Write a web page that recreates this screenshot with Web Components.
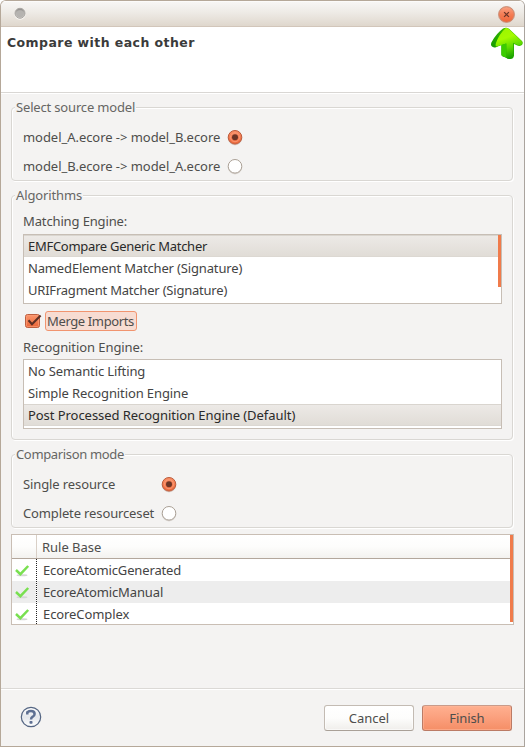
<!DOCTYPE html>
<html lang="en"><head><meta charset="utf-8"><title>Compare with each other</title>
<style>
html,body{margin:0;padding:0;background:#fff}
body{font:13px/18px "Noto Sans","Open Sans",sans-serif;color:#444;width:525px;height:747px;overflow:hidden}
</style></head><body>
<wizard-window>
  <title-bar slot="title"></title-bar>
  <wizard-header slot="header"><fit-text w="187" slot="heading">Compare with each other</fit-text></wizard-header>
  <group-box style="height:74px"><fit-text slot="legend" w="119">Select source model</fit-text>
    <div style="height:7px"></div>
    <radio-row lw="198" checked><fit-text w="197">model_A.ecore -&gt; model_B.ecore</fit-text></radio-row>
    <radio-row lw="198"><fit-text w="197">model_B.ecore -&gt; model_A.ecore</fit-text></radio-row>
  </group-box>
  <group-box style="height:245px;margin-top:14px"><fit-text slot="legend" w="66">Algorithms</fit-text>
    <field-label style="margin-top:8px;margin-bottom:4px"><fit-text w="104">Matching Engine:</fit-text></field-label>
    <list-box scroll="52">
      <list-item selected><fit-text w="179">EMFCompare Generic Matcher</fit-text></list-item>
      <list-item><fit-text w="214">NamedElement Matcher (Signature)</fit-text></list-item>
      <list-item><fit-text w="199">URIFragment Matcher (Signature)</fit-text></list-item>
    </list-box>
    <check-option><fit-text w="87">Merge Imports</fit-text></check-option>
    <field-label style="margin-top:7px;margin-bottom:3px"><fit-text w="120">Recognition Engine:</fit-text></field-label>
    <list-box>
      <list-item><fit-text w="117">No Semantic Lifting</fit-text></list-item>
      <list-item><fit-text w="160">Simple Recognition Engine</fit-text></list-item>
      <list-item selected><fit-text w="267">Post Processed Recognition Engine (Default)</fit-text></list-item>
    </list-box>
  </group-box>
  <group-box style="height:74px;margin-top:14px"><fit-text slot="legend" w="108">Comparison mode</fit-text>
    <div style="height:7px"></div>
    <radio-row lw="132" checked><fit-text w="92">Single resource</fit-text></radio-row>
    <radio-row lw="132"><fit-text w="131">Complete resourceset</fit-text></radio-row>
  </group-box>
  <rule-table><fit-text slot="head" w="59">Rule Base</fit-text>
    <rule-row><fit-text w="138">EcoreAtomicGenerated</fit-text></rule-row>
    <rule-row class="alt"><fit-text w="120">EcoreAtomicManual</fit-text></rule-row>
    <rule-row><fit-text w="86">EcoreComplex</fit-text></rule-row>
  </rule-table>
  <help-icon slot="footer"></help-icon>
  <push-button slot="footer" style="margin-left:auto"><fit-text w="40">Cancel</fit-text></push-button>
  <push-button slot="footer" primary><fit-text w="35">Finish</fit-text></push-button>
</wizard-window>
<script>
const define = (name, html, ready) => {
  const t = document.createElement('template');
  t.innerHTML = html;
  customElements.define(name, class extends HTMLElement {
    constructor() { super(); this.attachShadow({mode:'open'}).append(t.content.cloneNode(true)); }
    connectedCallback() { if (ready) ready(this, this.shadowRoot); }
  });
};

define('wizard-window', `<style>
:host{display:flex;flex-direction:column;box-sizing:border-box;width:525px;height:747px;border:1px solid #b5a899;border-right-color:#aaa49e;border-radius:6px 6px 0 0;background:#f4f3f2;overflow:hidden}
main{flex:1;padding:14px 11px 0 10px}
footer{display:flex;height:58px;box-sizing:border-box;border-top:1px solid #dbd9d6;box-shadow:inset 0 1px #fff;padding:16px 12px 0 19px;gap:8px;align-items:flex-start}
</style><slot name="title"></slot><slot name="header"></slot><main><slot></slot></main><footer><slot name="footer"></slot></footer>`);

define('title-bar', `<style>
:host{display:flex;justify-content:space-between;height:26px;box-sizing:border-box;border-bottom:1px solid #d2c6ba;background:linear-gradient(#f8f7f6,#eeebe6 45%,#dfd7cd);box-shadow:inset 0 1px #fcfbfa}
svg{display:block}
</style>
<svg width="40" height="25"><defs><linearGradient id="m" x2="0" y2="1"><stop stop-color="#898785"/><stop offset=".4" stop-color="#b2b0ad"/><stop offset="1" stop-color="#cbc8c4"/></linearGradient></defs>
<circle cx="19" cy="13" r="5.7" fill="#faf8f5"/><circle cx="19" cy="12.3" r="5" fill="url(#m)" stroke="#aaa7a3"/><circle cx="19" cy="12.8" r="3.5" fill="#b5b3b0"/></svg>
<svg width="36" height="25"><defs><linearGradient id="c" x2="0" y2="1"><stop stop-color="#faa384"/><stop offset=".5" stop-color="#f47d55"/><stop offset="1" stop-color="#ee6538"/></linearGradient></defs>
<circle cx="18.5" cy="13.7" r="8.6" fill="#e0d0c5"/><circle cx="18.5" cy="13.5" r="7.8" fill="url(#c)" stroke="#c98870"/><path d="M16.1 11.1l4.8 4.8m0-4.8l-4.8 4.8" stroke="#6b3528" stroke-width="1.3"/></svg>`);

define('wizard-header', `<style>
:host{display:flex;position:relative;height:66px;box-sizing:border-box;border-bottom:1px solid #d9d7d4;box-shadow:0 1px #fff;background:#fff;font:bold 12.5px/18px "DejaVu Sans",sans-serif;color:#3b3b3b;padding:7px 0 0 6px}
svg{position:absolute;right:0;top:-1px}
</style><slot name="heading"></slot>
<svg width="34" height="36" viewBox="0 0 34 36"><defs><linearGradient id="b" x1=".2" x2=".5" y2="1"><stop stop-color="#9bf500"/><stop offset=".35" stop-color="#a4fa00"/><stop offset=".65" stop-color="#62dd00"/><stop offset="1" stop-color="#16a000"/></linearGradient><linearGradient id="d" x1="1" x2="0" y2="1"><stop stop-color="#6ad800"/><stop offset=".45" stop-color="#2cb000"/><stop offset="1" stop-color="#0a9000"/></linearGradient></defs>
<path d="M13 2.6Q16 .6 19 2.8L32 15Q33.8 17.5 31.5 19.2Q29.6 20.6 27.3 19.6L24 18V29.5Q23.7 33 20 33Q17.6 33.2 16 31.8L13 30.6Q11.4 30 11.4 28.4V19L6 21.2Q3 22 1.5 20Q.3 18 2 15.6Q6 8 13 2.6Z" fill="url(#d)"/>
<path d="M16 1.7Q17.5 1.7 19 3.2L31.6 15.3Q33 17.2 31 18.7Q29.2 19.8 27.2 18.8L23 16.8V29.5Q22.7 32.5 20 32.7Q17.6 32.8 16.3 31.4V17.5L7 20.5Q4.8 20.7 6 17Q9 8 16 1.7Z" fill="url(#b)"/>
<path d="M11.4 19L16.3 17.5V31.6L13 30.4Q11.4 30 11.4 28.4Z" fill="#3bcc00"/></svg>`);

// Adjusts tracking so that the label's ink spans the width in "w".
define('fit-text', `<style>:host{display:inline-block;white-space:pre}span{display:inline-block}</style><span><slot></slot></span>`, (el, root) => {
  const s = root.querySelector('span'), n = el.textContent.length;
  const gap = (Number(el.getAttribute('w')) + .3 - s.getBoundingClientRect().width) / (n - 1);
  s.style.letterSpacing = gap + 'px';
  s.style.marginRight = -gap + 'px';
});

define('group-box', `<style>
:host{display:block;box-sizing:border-box;border:1px solid #d9d7d3;border-radius:4px;box-shadow:1px 1px #fff,inset 1px 1px #fff;padding:0 11px}
header{display:table;margin:-10px 0 0 -8px;padding:0 1px;height:18px;background:#f4f3f2;color:#666664}
</style><header><slot name="legend"></slot></header><slot></slot>`);

define('radio-row', `<style>
:host{display:flex;height:29px;align-items:center;color:#4e4e4c}
div{flex:none;padding-bottom:2px}svg{display:block;margin-left:6px}
.on{display:none}:host([checked]) .on{display:block}:host([checked]) .off{display:none}
</style><div><slot></slot></div>
<svg width="16" height="16"><defs><linearGradient id="r" x2="0" y2="1"><stop stop-color="#fa9067"/><stop offset="1" stop-color="#ec6537"/></linearGradient></defs>
<circle cx="8" cy="8.2" r="7.2" fill="#dedad6"/><g class="off"><circle cx="8" cy="7.3" r="6.8" fill="#fff" stroke="#aaa096"/></g>
<g class="on"><circle cx="8" cy="7.3" r="6.8" fill="url(#r)" stroke="#ba5b3c"/><circle cx="8" cy="7.3" r="4.5" fill="none" stroke="#f99a76"/><circle cx="8" cy="7.3" r="3" fill="#6b3526"/></g></svg>`, (el, root) => {
  root.querySelector('div').style.width = el.getAttribute('lw') + 'px';
});

define('field-label', `<style>:host{display:block;height:18px;color:#4e4e4c}</style><slot></slot>`);

define('list-box', `<style>
:host{display:block;position:relative;box-sizing:border-box;height:70px;border:1px solid #c7beb5;background:#fff;margin-right:-1px}
i{position:absolute;right:0;top:0;width:3px;background:#f07b4b}
</style><slot></slot><i></i>`, (el, root) => { root.querySelector('i').style.height = (el.getAttribute('scroll') || 0) + 'px'; });

define('list-item', `<style>
:host{display:flex;align-items:center;height:22px;box-sizing:border-box;padding-left:4px;color:#444}
:host([selected]){background:linear-gradient(#edeae7,#e0dcd6);box-shadow:inset 0 1px #d9d5cf,inset 0 -1px #dcd8d2;color:#2a2a2a}
</style><slot></slot>`);

define('check-option', `<style>
:host{display:flex;height:20px;margin-top:7px;padding-left:2px;color:#4e4e4c}
svg{display:block;margin-right:2px}
div{box-sizing:border-box;width:92px;height:20px;border:1px solid #f1946f;border-radius:3px;background:#f7dcd2;padding:0 0 0 1px}
</style><svg width="18" height="20"><defs><linearGradient id="k" x2="0" y2="1"><stop stop-color="#fb9870"/><stop offset="1" stop-color="#eb6536"/></linearGradient></defs>
<rect x=".5" y="3.5" width="14" height="13" rx="2" fill="url(#k)" stroke="#bd5f40"/><rect x="1.5" y="4.5" width="12" height="11" rx="1" fill="none" stroke="#fa9c78" opacity=".7"/><path d="M3.5 9.2L7 13.3L15.6 4.5" fill="none" stroke="#5e3025" stroke-width="2.1"/></svg><div><slot></slot></div>`);

define('rule-table', `<style>
:host{display:block;position:relative;box-sizing:border-box;height:91px;margin:6px -1px 0 0;border:1px solid #c9beb4;background:#fff;overflow:hidden}
header{display:grid;grid-template-columns:24px 1fr;height:24px;box-sizing:border-box;border-bottom:1px solid #b3a79c;background:linear-gradient(#fff,#fdfdfc 50%,#f3f2ef);color:#4e4e4c}
div{border-left:1px solid #d9d0c7;padding:3px 0 0 5px}
i{position:absolute;right:0;top:0;width:3px;height:87px;background:#f07b4b}
</style><header><span></span><div><slot name="head"></slot></div></header><slot></slot><i></i>`);

define('rule-row', `<style>
:host{display:grid;grid-template-columns:24px 1fr;height:22px;background:#fff;color:#444}
:host(.alt){background:#ededed}
div{background:repeating-linear-gradient(#222 0 1px,#fff 1px 2px) left/1px 100% no-repeat;padding:2px 0 0 7px}
</style><svg width="24" height="22"><ellipse cx="10" cy="16.3" rx="5.5" ry="1" fill="#d5d5d5"/><path d="M4 11L8.4 15.2L16.2 7" fill="none" stroke="#79e050" stroke-width="2.5"/></svg><div><slot></slot></div>`);

define('help-icon', `<style>:host{display:block}svg{display:block}</style>
<svg width="22" height="24"><defs><linearGradient id="h" x2="0" y2="1"><stop stop-color="#fff"/><stop offset=".5" stop-color="#e3e6eb"/><stop offset="1" stop-color="#fff"/></linearGradient></defs><circle cx="11" cy="12" r="9.7" fill="url(#h)" stroke="#546583" stroke-width="1.2"/><path d="M7.3 9.6V7.3Q9 6.1 11 6.1Q14.6 6.1 14.6 8.9Q14.6 10.5 12.7 11.7Q11 12.7 11 14.4" fill="none" stroke="#5d6f92" stroke-width="2.5"/><rect x="9.5" y="16" width="3" height="2.7" rx=".8" fill="#5d6f92"/></svg>`);

define('push-button', `<style>
:host{display:flex;align-items:center;justify-content:center;box-sizing:border-box;width:90px;height:26px;border:1px solid #c3bbb3;border-bottom-color:#a9a097;border-radius:3px;background:linear-gradient(#fff,#fdfdfc 50%,#f0eeeb);box-shadow:inset 0 0 0 1px #ffffff90;color:#4e4e4c}
:host([primary]){border-color:#bb7b65;border-top-color:#c99b8a;background:linear-gradient(#ffb090,#fba17f 45%,#f58e66);box-shadow:inset 0 0 0 1px #ffb89c90}
</style><slot></slot>`);
</script></body></html>
